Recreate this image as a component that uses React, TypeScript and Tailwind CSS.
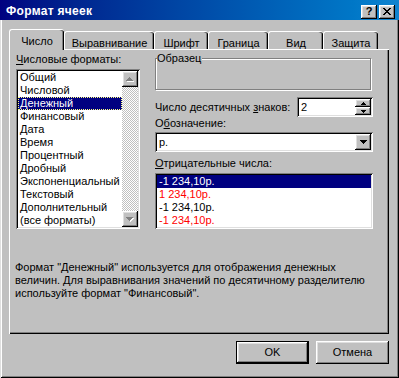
import React from "react";

const RAISED =
  "shadow-[inset_-1px_-1px_0_#000000,inset_1px_1px_0_#ffffff,inset_-2px_-2px_0_#808080,inset_2px_2px_0_#dfdfdf]";
const SUNKEN =
  "shadow-[inset_1px_1px_0_#808080,inset_-1px_-1px_0_#ffffff,inset_2px_2px_0_#000000,inset_-2px_-2px_0_#dfdfdf]";

function UpArrow({ disabled }: { disabled?: boolean }) {
  return (
    <svg width="8" height="5" viewBox="0 0 8 5" shapeRendering="crispEdges">
      {disabled && <path d="M4 1h1v1h1v1h1v1h1v1H1V4h1V3h1V2h1z" fill="#ffffff" />}
      <path d="M3 0h1v1h1v1h1v1h1v1H0V3h1V2h1V1h1z" fill={disabled ? "#808080" : "#000000"} />
    </svg>
  );
}

function DownArrow({ disabled }: { disabled?: boolean }) {
  return (
    <svg width="8" height="5" viewBox="0 0 8 5" shapeRendering="crispEdges">
      {disabled && <path d="M1 1h7v1H7v1H6v1H5v1H4V4H3V3H2V2H1z" fill="#ffffff" />}
      <path d="M0 0h7v1H6v1H5v1H4v1H3V3H2V2H1V1H0z" fill={disabled ? "#808080" : "#000000"} />
    </svg>
  );
}

const formats = [
  "Общий",
  "Числовой",
  "Денежный",
  "Финансовый",
  "Дата",
  "Время",
  "Процентный",
  "Дробный",
  "Экспоненциальный",
  "Текстовый",
  "Дополнительный",
  "(все форматы)",
];

export default function App() {
  return (
    <div className="w-[399px] h-[378px] bg-[#c0c0c0] flex flex-col font-['Liberation_Sans',Arial,sans-serif] text-[11px] leading-[13px] text-black select-none shadow-[inset_1px_1px_0_#dfdfdf,inset_-1px_-1px_0_#000000,inset_2px_2px_0_#ffffff,inset_-2px_-2px_0_#808080] overflow-hidden">
      {/* Title bar */}
      <div className="h-[20px] flex items-center bg-gradient-to-r from-[#000080] to-[#1084d0] shrink-0">
        <div className="pl-[6px] text-white font-bold text-[12px] tracking-[0.3px] flex-1 pt-[2px]">
          Формат ячеек
        </div>
        <div className="flex gap-[2px] pr-[4px] pt-[3px]">
          <div className={`w-[16px] h-[14px] bg-[#c0c0c0] ${RAISED} flex items-center justify-center font-bold text-[11px] leading-[11px] pb-px`}>
            ?
          </div>
          <div className={`w-[16px] h-[14px] bg-[#c0c0c0] ${RAISED} flex items-center justify-center pb-px`}>
            <svg width="8" height="7" viewBox="0 0 8 7" shapeRendering="crispEdges">
              <path
                d="M0 0h2v1h1v1h2V1h1V0h2v1H7v1H6v1H5v1h1v1h1v1h1v1H6V6H5V5H3v1H2v1H0V6h1V5h1V4h1V3H2V2H1V1H0z"
                fill="#000"
              />
            </svg>
          </div>
        </div>
      </div>

      {/* Body */}
      <div className="pl-[9px] pr-[10px] pt-[9px] flex flex-col">
        {/* Tabs */}
        <div className="flex items-end h-[20px]">
          <div className="w-[55px] h-[21px] -mb-px relative z-10 bg-[#c0c0c0] border-l border-t border-white rounded-t-[3px] shadow-[inset_-1px_0_0_#000000,inset_-2px_0_0_#808080] flex justify-center pt-[5px]">
            Число
          </div>
          <div className="w-[90px] h-[18px] bg-[#c0c0c0] border-l border-t border-white rounded-t-[3px] shadow-[inset_-1px_0_0_#000000,inset_-2px_0_0_#808080] flex justify-center pt-[5px]">
            Выравнивание
          </div>
          <div className="w-[54px] h-[18px] bg-[#c0c0c0] border-l border-t border-white rounded-t-[3px] shadow-[inset_-1px_0_0_#000000,inset_-2px_0_0_#808080] flex justify-center pt-[5px]">
            Шрифт
          </div>
          <div className="w-[60px] h-[18px] bg-[#c0c0c0] border-l border-t border-white rounded-t-[3px] shadow-[inset_-1px_0_0_#000000,inset_-2px_0_0_#808080] flex justify-center pt-[5px]">
            Граница
          </div>
          <div className="w-[55px] h-[18px] bg-[#c0c0c0] border-l border-t border-white rounded-t-[3px] shadow-[inset_-1px_0_0_#000000,inset_-2px_0_0_#808080] flex justify-center pt-[5px]">
            Вид
          </div>
          <div className="w-[55px] h-[18px] bg-[#c0c0c0] border-l border-t border-white rounded-t-[3px] shadow-[inset_-1px_0_0_#000000,inset_-2px_0_0_#808080] flex justify-center pt-[5px]">
            Защита
          </div>
        </div>

        {/* Panel */}
        <div className="w-[380px] h-[285px] bg-[#c0c0c0] shadow-[inset_1px_1px_0_#ffffff,inset_-1px_-1px_0_#000000,inset_-2px_-2px_0_#808080] flex flex-col">
          <div className="flex pl-[7px]">
            {/* Left column */}
            <div className="flex flex-col w-[124px] pt-[4px]">
              <div>
                <span className="underline">Ч</span>исловые форматы:
              </div>
              <div className={`mt-[3px] h-[160px] bg-white ${SUNKEN} p-[2px] flex`}>
                <div className="flex-1 flex flex-col">
                  {formats.map((f) => (
                    <div
                      key={f}
                      className={
                        f === "Денежный"
                          ? "h-[13px] bg-[#000080] text-white pl-[1px] border border-dotted border-[#ffff80] leading-[11px] whitespace-nowrap"
                          : "h-[13px] pl-[2px] whitespace-nowrap"
                      }
                    >
                      {f}
                    </div>
                  ))}
                </div>
                <div className="w-[16px] flex flex-col bg-[image:repeating-conic-gradient(#c0c0c0_0%_25%,#ffffff_0%_50%)] bg-[length:2px_2px]">
                  <div className={`h-[16px] bg-[#c0c0c0] ${RAISED} flex items-center justify-center`}>
                    <UpArrow disabled />
                  </div>
                  <div className="flex-1" />
                  <div className={`h-[16px] bg-[#c0c0c0] ${RAISED} flex items-center justify-center`}>
                    <DownArrow disabled />
                  </div>
                </div>
              </div>
            </div>

            {/* Right column */}
            <div className="flex flex-col w-[218px] ml-[15px] pt-[9px]">
              <div className="relative w-[216px] h-[32px] border border-[#808080] shadow-[inset_1px_1px_0_#ffffff,1px_1px_0_#ffffff]">
                <span className="absolute left-[1px] -top-[7px] bg-[#c0c0c0] pr-[1px]">Образец</span>
              </div>
              <div className="flex items-center mt-[7px] h-[20px]">
                <div className="flex-1">
                  Число десятичных <span className="underline">з</span>наков:
                </div>
                <div className={`w-[76px] h-[20px] bg-white ${SUNKEN} p-[2px] flex`}>
                  <div className="flex-1 pl-[2px] pt-[2px]">2</div>
                  <div className="w-[16px] flex flex-col">
                    <div className={`h-[8px] bg-[#c0c0c0] ${RAISED} flex items-center justify-center`}>
                      <svg width="5" height="3" viewBox="0 0 5 3" shapeRendering="crispEdges">
                        <path d="M2 0h1v1h1v1h1v1H0V2h1V1h1z" fill="#000" />
                      </svg>
                    </div>
                    <div className={`h-[8px] bg-[#c0c0c0] ${RAISED} flex items-center justify-center`}>
                      <svg width="5" height="3" viewBox="0 0 5 3" shapeRendering="crispEdges">
                        <path d="M0 0h5v1H4v1H3v1H2V2H1V1H0z" fill="#000" />
                      </svg>
                    </div>
                  </div>
                </div>
              </div>
              <div className="mt-0 h-[13px]">
                О<span className="underline">б</span>означение:
              </div>
              <div className={`mt-[2px] w-[218px] h-[20px] bg-white ${SUNKEN} p-[2px] flex`}>
                <div className="flex-1 pl-[2px] pt-[2px]">р.</div>
                <div className={`w-[16px] h-[16px] bg-[#c0c0c0] ${RAISED} flex items-center justify-center`}>
                  <svg width="7" height="4" viewBox="0 0 7 4" shapeRendering="crispEdges">
                    <path d="M0 0h7v1H6v1H5v1H4v1H3V3H2V2H1V1H0z" fill="#000" />
                  </svg>
                </div>
              </div>
              <div className="mt-[5px] h-[13px]">
                <span className="underline">О</span>трицательные числа:
              </div>
              <div className={`mt-[3px] w-[218px] h-[56px] bg-white ${SUNKEN} p-[2px] flex flex-col`}>
                <div className="h-[13px] bg-[#000080] text-white pl-[2px]">-1 234,10р.</div>
                <div className="h-[13px] text-[#ff0000] pl-[2px]">1 234,10р.</div>
                <div className="h-[13px] text-black pl-[2px]">-1 234,10р.</div>
                <div className="h-[13px] text-[#ff0000] pl-[2px]">-1 234,10р.</div>
              </div>
            </div>
          </div>

          <div className="mt-[32px] pl-[6px] whitespace-nowrap">
            Формат "Денежный" используется для отображения денежных
            <br />
            величин. Для выравнивания значений по десятичному разделителю
            <br />
            используйте формат "Финансовый".
          </div>
        </div>

        {/* Buttons */}
        <div className="flex justify-end gap-[7px] mt-[7px]">
          <div className="w-[73px] h-[23px] border border-black bg-[#c0c0c0]">
            <div className={`w-full h-full ${RAISED} flex items-center justify-center`}>OK</div>
          </div>
          <div className={`w-[73px] h-[23px] bg-[#c0c0c0] ${RAISED} flex items-center justify-center`}>
            Отмена
          </div>
        </div>
      </div>
    </div>
  );
}
